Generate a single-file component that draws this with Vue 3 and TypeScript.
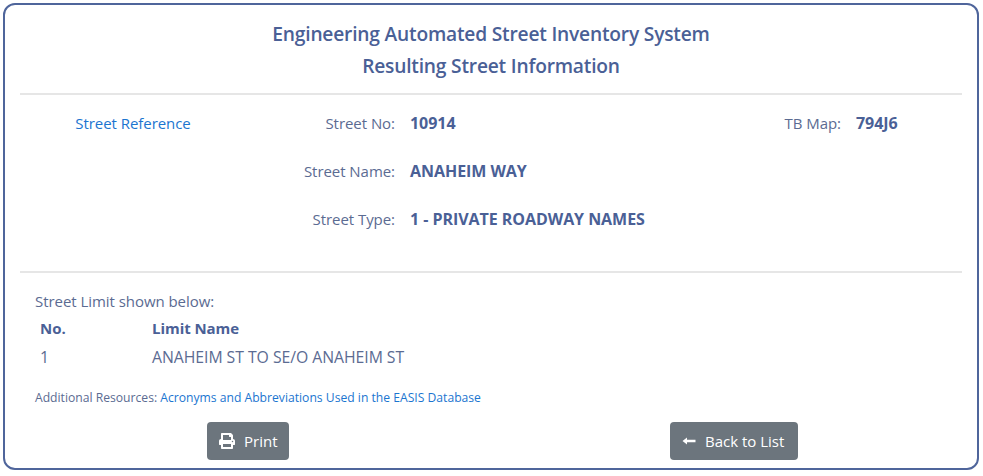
<script setup lang="ts">
const limits = [{ no: 1, name: 'ANAHEIM ST TO SE/O ANAHEIM ST' }]
</script>

<template>
  <div class="page">
    <div class="card">
      <header class="head">
        <h1>Engineering Automated Street Inventory System</h1>
        <h1>Resulting Street Information</h1>
      </header>
      <hr />
      <section class="info">
        <a class="ref" href="#">Street Reference</a>
        <span class="label">Street No:</span>
        <b class="value">10914</b>
        <span class="label map">TB Map:</span>
        <b class="value">794J6</b>
        <span class="label second">Street Name:</span>
        <b class="value wide">ANAHEIM WAY</b>
        <span class="label second">Street Type:</span>
        <b class="value wide">1 - PRIVATE ROADWAY NAMES</b>
      </section>
      <hr />
      <section class="limits">
        <p class="shown">Street Limit shown below:</p>
        <div class="row heading">
          <span class="no">No.</span>
          <span>Limit Name</span>
        </div>
        <div v-for="l in limits" :key="l.no" class="row cells">
          <span class="no">{{ l.no }}</span>
          <span>{{ l.name }}</span>
        </div>
        <p class="extra">
          Additional Resources:
          <a href="#">Acronyms and Abbreviations Used in the EASIS Database</a>
        </p>
      </section>
      <footer class="actions">
        <button type="button" class="btn print">
          <svg width="16" height="16" viewBox="0 0 512 512" fill="#fff">
            <path d="M448 192V77.25c0-8.49-3.37-16.62-9.37-22.63L393.37 9.37c-6-6-14.14-9.37-22.63-9.37H96C78.33 0 64 14.33 64 32v160c-35.35 0-64 28.65-64 64v112c0 8.84 7.16 16 16 16h48v96c0 17.67 14.33 32 32 32h320c17.67 0 32-14.33 32-32v-96h48c8.84 0 16-7.16 16-16V256c0-35.35-28.65-64-64-64zm-64 256H128v-96h256v96zm0-224H128V64h192v48c0 8.84 7.16 16 16 16h48v96zm48 72c-13.25 0-24-10.75-24-24 0-13.26 10.75-24 24-24s24 10.74 24 24c0 13.25-10.75 24-24 24z" />
          </svg>
          Print
        </button>
        <button type="button" class="btn back">
          <svg width="14" height="14" viewBox="0 0 14 14" fill="#fff">
            <path d="M0.5 7 5 3.6V5.8H13.5V8.2H5V10.4Z" />
          </svg>
          Back to List
        </button>
      </footer>
    </div>
  </div>
</template>

<style>
body {
  background: #fff;
}
</style>

<style scoped>
.page {
  padding: 3px 3px 0;
  width: 983px;
  box-sizing: border-box;
  font-family: "Open Sans", "Liberation Sans", sans-serif;
  font-size: 15px;
  letter-spacing: -0.05px;
  color: #5b6b92;
}
.card {
  box-sizing: border-box;
  width: 976px;
  height: 467px;
  border: 2px solid #4f659b;
  border-radius: 12px;
  padding: 0 15px;
}
.head {
  text-align: center;
  padding-top: 13px;
  height: 88px;
  box-sizing: border-box;
}
h1 {
  margin: 0;
  font-size: 19.2px;
  line-height: 32px;
  font-weight: 600;
  letter-spacing: -0.2px;
  color: #4a6096;
}
hr {
  border: 0;
  height: 2px;
  background: #e6e6e6;
  margin: 0;
}
.info {
  display: grid;
  grid-template-columns: 226px 149px 1fr 100px 121px;
  grid-auto-rows: 48px;
  height: 176px;
  padding-top: 4px;
  box-sizing: border-box;
  align-items: center;
}
.ref {
  text-align: center;
  color: #1b75d0;
  text-decoration: none;
}
.label {
  text-align: right;
}
.value {
  padding-left: 15px;
  color: #4a6096;
  font-weight: 700;
  font-size: 16px;
}
.second {
  grid-column: 2;
}
.wide {
  grid-column: 3 / 6;
}
.limits {
  padding: 19px 15px 0;
}
.shown {
  margin: 0;
  line-height: 18px;
}
.row {
  display: flex;
  padding-left: 5px;
  height: 28px;
  align-items: center;
}
.no {
  width: 112px;
}
.heading {
  margin-top: 4px;
  font-weight: 700;
  color: #4a6096;
}
.cells {
  font-size: 15.8px;
  margin-top: 1px;
}
.extra {
  margin: 18px 0 0;
  font-size: 12.15px;
  line-height: 18px;
  letter-spacing: 0;
}
.extra a {
  color: #1b75d0;
  text-decoration: none;
}
.actions {
  display: flex;
  padding: 15px 0 0 187px;
}
.btn {
  display: flex;
  align-items: center;
  gap: 9px;
  height: 38px;
  border: 0;
  border-radius: 4px;
  background: #6c757d;
  color: #fff;
  font: inherit;
  padding: 0 0 0 12px;
}
.print {
  width: 82px;
}
.back {
  width: 128px;
  margin-left: 381px;
}
</style>
